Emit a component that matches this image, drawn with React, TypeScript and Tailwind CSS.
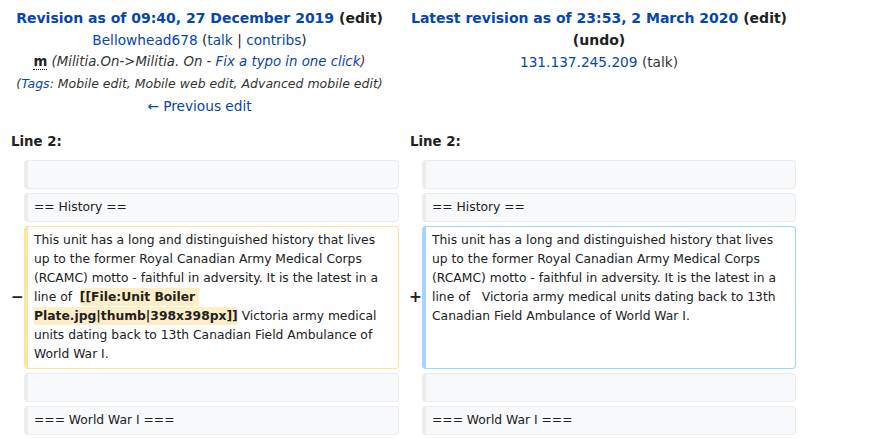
import { FunctionComponent, ReactNode } from "react";

const link = "text-[#0645ad]";

const Box: FunctionComponent<{ kind: "context" | "deleted" | "added"; children?: ReactNode }> = ({ kind, children }) => {
    const tone =
        kind === "context"
            ? "bg-[#f8f9fa] border-[#eaecf0]"
            : kind === "deleted"
                ? "bg-white border-[#ffe49c]"
                : "bg-white border-[#a3d3ff]";
    return (
        <div className={`${tone} border border-l-4 rounded-[4px] px-[6px] py-[4px] text-[12.32px] leading-[19px] whitespace-pre-wrap break-words`}>
            {children ?? "\u00a0"}
        </div>
    );
};

const Marker: FunctionComponent<{ sign?: string }> = ({ sign }) => (
    <div className="flex items-center justify-end font-bold text-[15.4px] leading-none">{sign}</div>
);

const intro =
    "This unit has a long and distinguished history that lives up to the former Royal Canadian Army Medical Corps (RCAMC) motto - faithful in adversity. It is the latest in a line of ";
const tail = " Victoria army medical units dating back to 13th Canadian Field Ambulance of World War I.";

const App: FunctionComponent = () => {
    return (
        <div className="w-[874px] h-[439px] overflow-hidden bg-white text-[#202122] font-['DejaVu_Sans',sans-serif]">
            {/* diff titles */}
            <div className="grid grid-cols-[399px_400px] pt-[7px] text-[13.7px] leading-[22px] text-center">
                <div>
                    <div className="font-bold text-[14px]">
                        <span className={link}>Revision as of 09:40, 27 December 2019</span> (edit)
                    </div>
                    <div>
                        <span className={link}>Bellowhead678</span> (<span className={link}>talk</span> | <span className={link}>contribs</span>)
                    </div>
                    <div className="text-[13.3px]">
                        <abbr className="font-bold no-underline border-b border-dotted border-[#202122]">m</abbr>{" "}
                        <span className="italic text-[#333]">
                            (Militia.On-&gt;Militia. On - <span className={link}>Fix a typo in one click</span>)
                        </span>
                    </div>
                    <div className="italic text-[12.5px] text-[#333]">
                        (<span className={link}>Tags</span>: Mobile edit, Mobile web edit, Advanced mobile edit)
                    </div>
                    <div>
                        <span className={link}>← Previous edit</span>
                    </div>
                </div>
                <div>
                    <div className="font-bold text-[14px]">
                        <span className={link}>Latest revision as of 23:53, 2 March 2020</span> (edit)
                    </div>
                    <div className="font-bold text-[14px]">(undo)</div>
                    <div>
                        <span className={link}>131.137.245.209</span> <span className="text-[#333]">(talk)</span>
                    </div>
                </div>
            </div>

            {/* line numbers */}
            <div className="grid grid-cols-[399px_400px] mt-[14px] text-[13.3px] leading-[22px] font-bold">
                <div className="pl-[11px]">Line 2:</div>
                <div className="pl-[11px]">Line 2:</div>
            </div>

            {/* diff rows */}
            <div className="grid grid-cols-[24px_375px_23px_374px] gap-y-[4px] mt-[7px]">
                <Marker />
                <Box kind="context" />
                <Marker />
                <Box kind="context" />

                <Marker />
                <Box kind="context">== History ==</Box>
                <Marker />
                <Box kind="context">== History ==</Box>

                <Marker sign="−" />
                <Box kind="deleted">
                    {intro + " "}
                    <del className="no-underline font-bold bg-[#feeec8] rounded-[4px] py-[2px]">[[File:Unit Boiler Plate.jpg|thumb|398x398px]]</del>
                    {tail}
                </Box>
                <Marker sign="+" />
                <Box kind="added">
                    {intro + "  "}
                    {tail.slice(1)}
                </Box>

                <Marker />
                <Box kind="context" />
                <Marker />
                <Box kind="context" />

                <Marker />
                <Box kind="context">=== World War I ===</Box>
                <Marker />
                <Box kind="context">=== World War I ===</Box>
            </div>
        </div>
    );
};

export default App;
